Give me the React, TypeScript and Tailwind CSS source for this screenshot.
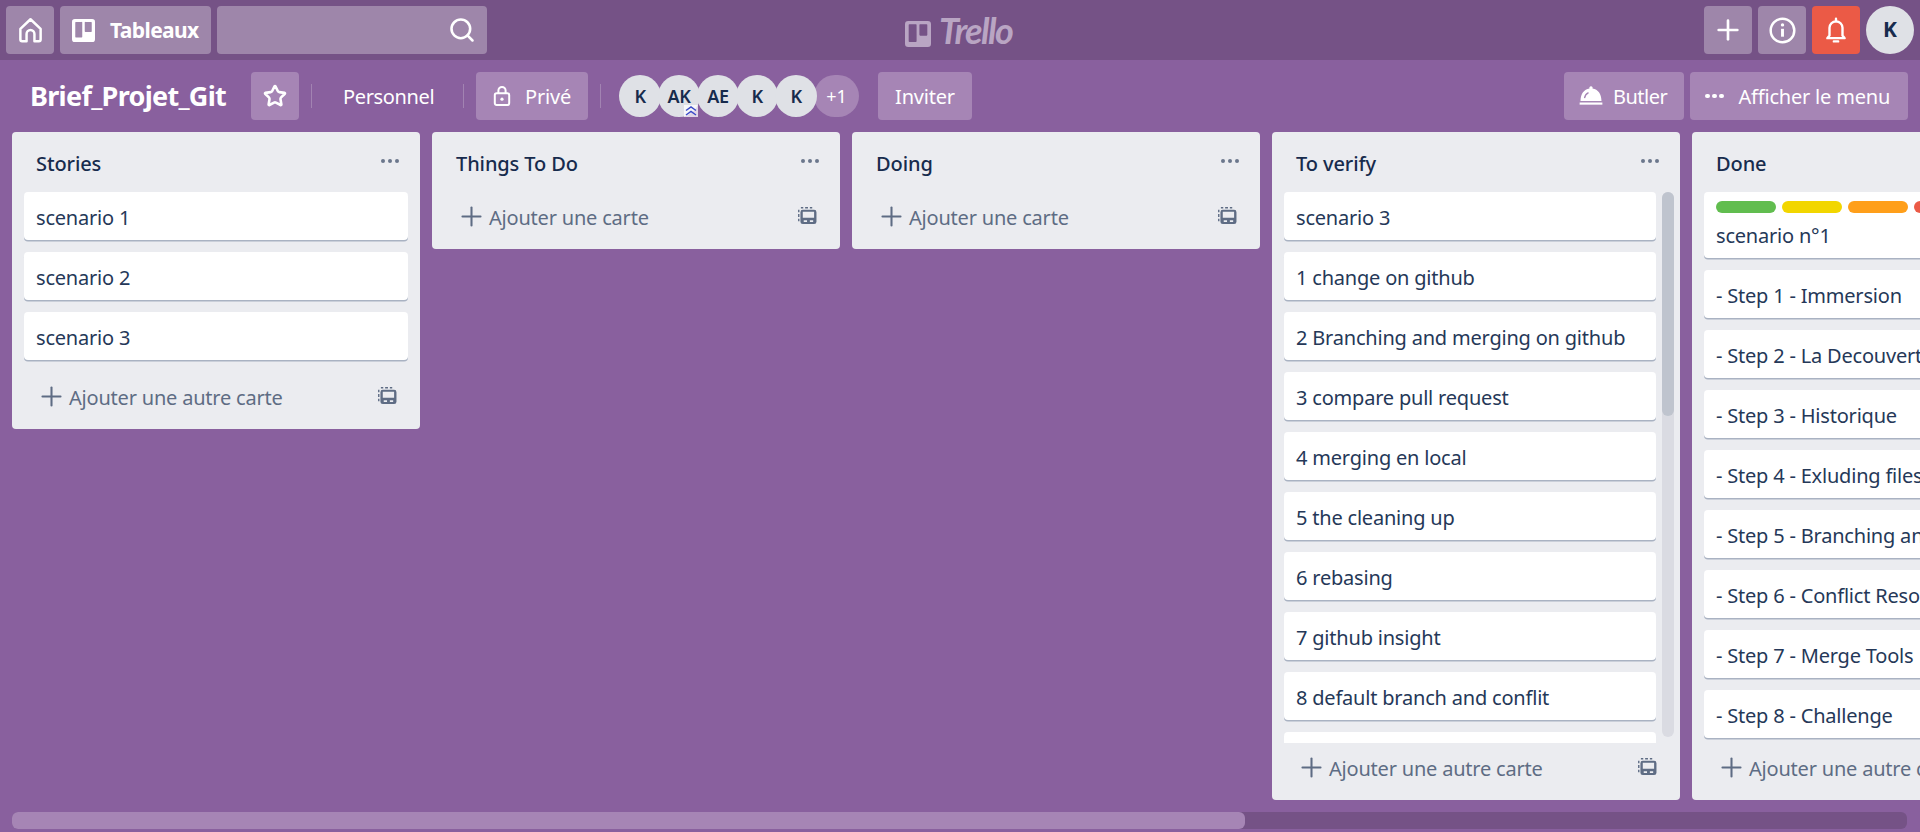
import type { ReactNode } from 'react';
import { Search, Star, Plus } from 'lucide-react';

function TrelloMark({ className = '' }: { className?: string }) {
    return (
        <svg viewBox="0 0 24 24" className={className} fill="currentColor">
            <path fillRule="evenodd" d="M3 0h18a3 3 0 0 1 3 3v18a3 3 0 0 1-3 3H3a3 3 0 0 1-3-3V3a3 3 0 0 1 3-3zm1 3a.6.6 0 0 0-.6.6v15c0 .4.3.7.6.7h6c.4 0 .7-.3.7-.7v-15A.6.6 0 0 0 10 3zm10 0a.6.6 0 0 0-.7.6v9.200c0 .4.3.7.7.7h6c.4 0 .6-.3.6-.7V3.600A.6.6 0 0 0 20 3z" />
        </svg>
    );
}

function TemplateIcon() {
    return (
        <svg viewBox="0 0 20 18" className="w-[19px] h-[17px] text-[#5e6c84]" fill="currentColor">
            <path d="M3 0h2.500v1.500H3zM7.500 0h3v1.500h-3zM12.500 0h2.500v1.500h-2.500zM0 3h1.500v2.500H0zM0 7.500h1.500v3H0zM0 12.500h1.500v2.500H0z" />
            <path fillRule="evenodd" d="M5 3h12a2.500 2.500 0 0 1 2.500 2.500v10A2.500 2.500 0 0 1 17 18H5a2.500 2.500 0 0 1-2.500-2.500v-10A2.500 2.500 0 0 1 5 3zm0 2v6.500h12V5zm1 9v1.800h3.500V14zm6.500 0v1.800H16V14z" />
        </svg>
    );
}

function Dots({ className = '' }: { className?: string }) {
    return (
        <span className={`flex gap-[2.500px] ${className}`}>
            <span className="w-[4.500px] h-[4.500px] rounded-full bg-current" />
            <span className="w-[4.500px] h-[4.500px] rounded-full bg-current" />
            <span className="w-[4.500px] h-[4.500px] rounded-full bg-current" />
        </span>
    );
}

function TopButton({ children, className = '' }: { children: ReactNode; className?: string }) {
    return <div className={`h-[48px] rounded-[4px] bg-[#9e86aa] flex items-center text-white ${className}`}>{children}</div>;
}

function BoardButton({ children, className = '' }: { children: ReactNode; className?: string }) {
    return <div className={`h-[48px] rounded-[4px] bg-[#a685b5] flex items-center text-white text-[20px] tracking-[-0.2px] ${className}`}>{children}</div>;
}

function Divider({ className = '' }: { className?: string }) {
    return <div className={`w-px h-[24px] mt-[12px] bg-[#a283b2] ${className}`} />;
}

function Avatar({ label, badge }: { label: string; badge?: boolean }) {
    return (
        <div className="relative w-[42px] h-[42px] -mr-[3px] rounded-full bg-[#dfe1e6] text-[#172b4d] font-semibold text-[18px] tracking-[-0.4px] flex items-center justify-center">
            {label}
            {badge && (
                <svg viewBox="0 0 14 12" className="absolute left-[26px] top-[30px] w-[14px] h-[12px]">
                    <rect width="14" height="12" fill="#ffffff" opacity="0.75" />
                    <path d="M2 5.500l5-3.500 5 3.500M2 10l5-3.500 5 3.500" fill="none" stroke="#3b4bc8" strokeWidth="1.500" />
                </svg>
            )}
        </div>
    );
}

function Card({ text }: { text?: string }) {
    return (
        <div className="shrink-0 h-[48px] mb-[12px] px-[12px] pt-[3px] rounded-[4px] bg-white shadow-[0_1.500px_0_#a9b2c2] text-[20px] tracking-[-0.2px] text-[#253858] flex items-center whitespace-nowrap overflow-hidden">
            {text}
        </div>
    );
}

function ListHead({ title }: { title: string }) {
    return (
        <div className="h-[60px] shrink-0 pl-[24px] pr-[21px] flex items-center justify-between">
            <span className="pt-[3px] text-[20px] font-medium tracking-[-0.1px] text-[#172b4d]">{title}</span>
            <Dots className="text-[#6b778c] -mt-[2px]" />
        </div>
    );
}

function AddFooter({ text }: { text: string }) {
    return (
        <div className="h-[57px] shrink-0 pb-[9px] flex items-center text-[#5e6c84] text-[20px] tracking-[-0.2px]">
            <Plus className="w-[31px] h-[31px] ml-[24px] mr-[2px] shrink-0" strokeWidth={1.6} />
            <span className="flex-1 pt-[3px] whitespace-nowrap">{text}</span>
            <span className="mr-[23px] -mt-[1px]"><TemplateIcon /></span>
        </div>
    );
}

function List({ title, cards, add }: { title: string; cards: string[]; add: string }) {
    return (
        <div className="w-[408px] shrink-0 self-start rounded-[4px] bg-[#ebecf0] flex flex-col">
            <ListHead title={title} />
            <div className="px-[12px] flex flex-col">
                {cards.map((c) => (
                    <Card key={c} text={c} />
                ))}
            </div>
            <AddFooter text={add} />
        </div>
    );
}

const verifyCards = [
    'scenario 3',
    '1 change on github',
    '2 Branching and merging on github',
    '3 compare pull request',
    '4 merging en local',
    '5 the cleaning up',
    '6 rebasing',
    '7 github insight',
    '8 default branch and conflit',
];

const doneCards = [
    '- Step 1 - Immersion',
    '- Step 2 - La Decouverte',
    '- Step 3 - Historique',
    '- Step 4 - Exluding files',
    '- Step 5 - Branching and merging',
    '- Step 6 - Conflict Resolution',
    '- Step 7 - Merge Tools',
    '- Step 8 - Challenge',
];

export default function App() {
    return (
        <div className="w-[1920px] h-[832px] overflow-hidden bg-[#89609e] flex flex-col font-['Noto_Sans',sans-serif]">
            {/* Top bar */}
            <div className="relative h-[60px] shrink-0 bg-[#755286] flex items-center px-[6px] gap-[6px]">
                <TopButton className="w-[48px] justify-center">
                    <svg viewBox="0 0 24 24" className="w-[27px] h-[27px]" fill="none" stroke="currentColor" strokeWidth="2.200" strokeLinejoin="round">
                        <path d="M3 10.500L12 2l9 8.500V20a1.500 1.500 0 0 1-1.500 1.500h-4V15a3.500 3.500 0 0 0-7 0v6.500h-4A1.500 1.500 0 0 1 3 20z" />
                    </svg>
                </TopButton>
                <TopButton className="w-[151px] pl-[12px]">
                    <TrelloMark className="w-[23px] h-[23px]" />
                    <span className="ml-[15px] pt-[2px] text-[21px] font-bold tracking-[-0.6px]">Tableaux</span>
                </TopButton>
                <TopButton className="w-[270px] justify-end pr-[11px]">
                    <Search className="w-[28px] h-[28px]" strokeWidth={2.2} />
                </TopButton>

                {/* Logo sits centred over the bar */}
                <div className="absolute left-[904px] top-[10px] flex items-center text-[#b9a5c3]">
                    <TrelloMark className="w-[28px] h-[26px] mt-[7px]" />
                    <span className="ml-[7px] text-[36px] leading-[40px] italic font-bold font-['Lato',sans-serif] tracking-[-1.6px]">Trello</span>
                </div>

                <div className="ml-auto flex items-center gap-[6px]">
                    <TopButton className="w-[48px] justify-center">
                        <Plus className="w-[32px] h-[32px]" strokeWidth={2} />
                    </TopButton>
                    <TopButton className="w-[48px] justify-center">
                        <svg viewBox="0 0 24 24" className="w-[27px] h-[27px]" fill="none" stroke="currentColor" strokeWidth="2.200">
                            <circle cx="12" cy="12" r="10.500" />
                            <path d="M12 10.500v7" strokeWidth="2.600" />
                            <circle cx="12" cy="7" r="1.500" fill="currentColor" stroke="none" />
                        </svg>
                    </TopButton>
                    <div className="w-[48px] h-[48px] rounded-[4px] bg-[#eb5a46] flex items-center justify-center text-white">
                        <svg viewBox="0 0 24 24" className="w-[26px] h-[26px]" fill="none" stroke="currentColor" strokeWidth="2.200" strokeLinejoin="round">
                            <path d="M6 17V10a6 6 0 0 1 12 0v7l2 2.500H4z" />
                            <path d="M12 1.500V4M10 22.500h4" strokeLinecap="round" />
                        </svg>
                    </div>
                    <div className="w-[48px] h-[48px] rounded-full bg-[#dfe1e6] flex items-center justify-center text-[#172b4d] text-[21px] font-bold">K</div>
                </div>
            </div>

            {/* Board header */}
            <div className="h-[72px] shrink-0 flex items-start pt-[12px] pl-[30px] pr-[12px]">
                <span className="w-[221px] h-[48px] flex items-center text-[27px] font-bold text-white tracking-[-0.7px] whitespace-nowrap">Brief_Projet_Git</span>
                <BoardButton className="w-[48px] justify-center">
                    <Star className="w-[24px] h-[24px]" strokeWidth={2.6} />
                </BoardButton>
                <Divider className="ml-[12px]" />
                <span className="ml-[31px] w-[120px] h-[48px] pt-[2px] flex items-center text-white text-[20px] tracking-[-0.35px]">Personnel</span>
                <Divider />
                <BoardButton className="ml-[12px] w-[112px] pl-[17px]">
                    <svg viewBox="0 0 20 24" className="w-[18px] h-[24px]" fill="none" stroke="currentColor" strokeWidth="2.200">
                        <rect x="2" y="9" width="16" height="13" rx="2" />
                        <path d="M6 9V6a4 4 0 0 1 8 0v3" />
                        <circle cx="10" cy="15.500" r="1.800" fill="currentColor" stroke="none" />
                    </svg>
                    <span className="ml-[14px] pt-[2px]">Privé</span>
                </BoardButton>
                <Divider className="ml-[12px]" />
                <div className="ml-[18px] mt-[3px] flex items-center">
                    <Avatar label="K" />
                    <Avatar label="AK" badge />
                    <Avatar label="AE" />
                    <Avatar label="K" />
                    <Avatar label="K" />
                    <div className="w-[45px] h-[42px] rounded-full bg-[#a685b5] text-white text-[18px] flex items-center justify-center">+1</div>
                </div>
                <BoardButton className="ml-[19px] w-[94px] pt-[2px] justify-center">Inviter</BoardButton>

                <div className="ml-auto flex items-center gap-[6px]">
                    <BoardButton className="w-[120px] pl-[14px]">
                        <svg viewBox="0 0 24 24" className="w-[26px] h-[26px]" fill="currentColor">
                            <path d="M12 3a1.500 1.500 0 0 1 1.400 2.100C18.500 5.900 21.500 10 21.700 16.500H2.300C2.500 10 5.500 5.900 10.600 5.100A1.500 1.500 0 0 1 12 3z" />
                            <path d="M6 14c.4-2.500 1.700-4.300 3.700-5.200" fill="none" stroke="#a685b5" strokeWidth="1.200" />
                            <path d="M1.500 18h21v2h-21z" />
                        </svg>
                        <span className="ml-[9px] pt-[2px] tracking-[-0.5px]">Butler</span>
                    </BoardButton>
                    <BoardButton className="w-[218px] pl-[15px]">
                        <Dots />
                        <span className="ml-[15px] pt-[2px] whitespace-nowrap">Afficher le menu</span>
                    </BoardButton>
                </div>
            </div>

            {/* Lists */}
            <div className="h-[668px] pl-[12px] flex gap-[12px] shrink-0">
                <List title="Stories" cards={['scenario 1', 'scenario 2', 'scenario 3']} add="Ajouter une autre carte" />
                <List title="Things To Do" cards={[]} add="Ajouter une carte" />
                <List title="Doing" cards={[]} add="Ajouter une carte" />

                <div className="w-[408px] h-[668px] shrink-0 rounded-[4px] bg-[#ebecf0] flex flex-col">
                    <ListHead title="To verify" />
                    <div className="relative h-[551px] shrink-0 pl-[12px] pr-[24px] flex flex-col overflow-hidden">
                        {verifyCards.map((c) => (
                            <Card key={c} text={c} />
                        ))}
                        <Card />
                        <div className="absolute right-[6px] top-0 w-[12px] h-[545px] rounded-[6px] bg-[#dadbe2]">
                            <div className="w-[12px] h-[224px] rounded-[6px] bg-[#bfc4ce]" />
                        </div>
                    </div>
                    <AddFooter text="Ajouter une autre carte" />
                </div>

                <div className="w-[408px] h-[668px] shrink-0 rounded-[4px] bg-[#ebecf0] flex flex-col">
                    <ListHead title="Done" />
                    <div className="h-[551px] shrink-0 px-[12px] flex flex-col overflow-hidden">
                        <div className="shrink-0 h-[66px] mb-[12px] px-[12px] rounded-[4px] bg-white shadow-[0_1.500px_0_#a9b2c2] overflow-hidden">
                            <div className="flex gap-[6px] mt-[9px]">
                                <span className="w-[60px] h-[12px] rounded-full bg-[#61bd4f]" />
                                <span className="w-[60px] h-[12px] rounded-full bg-[#f2d600]" />
                                <span className="w-[60px] h-[12px] rounded-full bg-[#ff9f1a]" />
                                <span className="w-[60px] h-[12px] rounded-full bg-[#eb5a46]" />
                            </div>
                            <div className="text-[20px] tracking-[-0.2px] leading-[30px] mt-[8px] text-[#253858]">scenario n°1</div>
                        </div>
                        {doneCards.map((c) => (
                            <Card key={c} text={c} />
                        ))}
                    </div>
                    <AddFooter text="Ajouter une autre carte" />
                </div>
            </div>

            {/* Horizontal scrollbar */}
            <div className="mt-[12px] ml-[12px] w-[1895px] h-[17px] rounded-[6px] bg-[#755286]">
                <div className="w-[1233px] h-[17px] rounded-[6px] bg-[#a685b5]" />
            </div>
        </div>
    );
}
